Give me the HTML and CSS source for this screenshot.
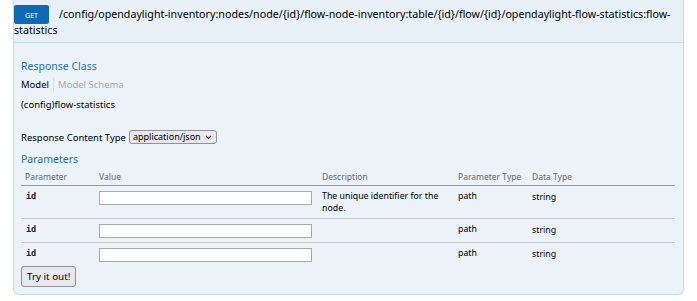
FILE: index.html
```html
<!DOCTYPE html>
<html lang="en">
<head>
    <meta charset="UTF-8">
    <title>flow-statistics</title>
    <link rel="stylesheet" href="styles.css">
</head>
<body>
    <div class="operation">
        <div class="heading">
            <span class="method">GET</span>
            <span class="path">/config/opendaylight-inventory:nodes/node/{id}/flow-node-inventory:table/{id}/flow/{id}/opendaylight-flow-statistics:flow-statistics</span>
        </div>

        <div class="content">
            <h4 class="section-title">Response Class</h4>
            <ul class="signature-nav">
                <li class="selected">Model</li>
                <li>Model Schema</li>
            </ul>
            <div class="model-name">(config)flow-statistics</div>

            <div class="content-type">
                <span>Response Content Type</span>
                <div class="select-box">
                    <select>
                        <option>application/json</option>
                        <option>application/xml</option>
                    </select>
                    <svg width="7" height="5" viewBox="0 0 7 5"><path d="M1 1 L3.5 3.5 L6 1" fill="none" stroke="#222" stroke-width="1.2"/></svg>
                </div>
            </div>

            <h4 class="section-title params-title">Parameters</h4>
            <table class="params">
                <colgroup>
                    <col style="width: 74px">
                    <col style="width: 223px">
                    <col style="width: 136px">
                    <col style="width: 74px">
                    <col>
                </colgroup>
                <thead>
                    <tr>
                        <th>Parameter</th>
                        <th>Value</th>
                        <th>Description</th>
                        <th>Parameter Type</th>
                        <th>Data Type</th>
                    </tr>
                </thead>
                <tbody>
                    <tr>
                        <td class="code">id</td>
                        <td><input type="text" class="param-input"></td>
                        <td>The unique identifier for the node.</td>
                        <td>path</td>
                        <td class="data-type">string</td>
                    </tr>
                    <tr>
                        <td class="code">id</td>
                        <td><input type="text" class="param-input"></td>
                        <td></td>
                        <td>path</td>
                        <td class="data-type">string</td>
                    </tr>
                    <tr>
                        <td class="code">id</td>
                        <td><input type="text" class="param-input"></td>
                        <td></td>
                        <td>path</td>
                        <td class="data-type">string</td>
                    </tr>
                </tbody>
            </table>

            <button class="try-btn">Try it out!</button>
        </div>
    </div>
</body>
</html>
```

FILE: styles.css
```css
* {
    margin: 0;
    padding: 0;
    box-sizing: border-box;
}

body {
    font-family: 'Noto Sans', 'Open Sans', sans-serif;
    background-color: #fff;
    color: #000;
}

.operation {
    width: 671px;
    margin-left: 13px;
}

/* 标题栏 */
.heading {
    background-color: #e7f0f7;
    border: 1px solid #c3d9ec;
    border-top: none;
    padding: 6px 0 4px 0;
    font-size: 10.7px;
    line-height: 16px;
}

.method {
    float: left;
    width: 35px;
    height: 19px;
    margin: -1px 10px -10px 0;
    background-color: #0f6ab4;
    color: #fff;
    font-size: 7px;
    line-height: 19px;
    padding-top: 1px;
    text-align: center;
    border-radius: 2px;
}

.path {
    color: #000;
}

/* 内容 */
.content {
    background-color: #ebf3f9;
    border: 1px solid #c3d9ec;
    border-top: none;
    border-radius: 0 0 6px 6px;
    padding: 17px 8px 7px 7px;
    font-size: 9.5px;
}

.section-title {
    font-size: 10.5px;
    line-height: 13px;
    font-weight: normal;
    color: #1f6fb8;
}

.signature-nav {
    list-style: none;
    display: flex;
    margin-top: 5px;
    line-height: 14px;
}

.signature-nav li {
    padding-left: 4px;
    color: #aaa;
}

.signature-nav li.selected {
    padding: 0 4px 0 0;
    color: #000;
    border-right: 1px solid #ddd;
}

.model-name {
    margin-top: 6px;
    line-height: 14px;
}

.content-type {
    display: flex;
    align-items: center;
    gap: 3px;
    height: 14px;
    margin-top: 18px;
}

.select-box {
    display: flex;
    align-items: center;
    width: 88px;
    height: 14px;
    padding: 0 4px 0 3px;
    background-color: #e9e9ed;
    border: 1px solid #8f8f9d;
    border-radius: 3px;
}

.select-box select {
    flex: 1;
    appearance: none;
    border: none;
    background: transparent;
    font-family: inherit;
    font-size: 9px;
    line-height: 12px;
    color: #000;
    outline: none;
}

.params-title {
    margin-top: 9px;
}

/* 参数表 */
.params {
    width: 100%;
    margin-top: 1px;
    border-collapse: collapse;
    table-layout: fixed;
}

.params th {
    text-align: left;
    font-weight: normal;
    font-size: 8.5px;
    line-height: 12px;
    white-space: nowrap;
    color: #666;
    padding: 4px 4px 2px;
    border-bottom: 1px solid #999;
}

.params td {
    font-size: 8.8px;
    line-height: 12px;
    padding: 4px;
    vertical-align: top;
    border-bottom: 1px solid #ccc;
}

.params tbody tr:last-child td {
    border-bottom: none;
}

.params td.code {
    font-family: 'DejaVu Sans Mono', monospace;
    font-weight: bold;
    font-size: 8.5px;
    padding-left: 5px;
    color: #222;
}

.params td.data-type {
    padding-top: 5px;
}

.param-input {
    display: block;
    width: 213px;
    height: 14px;
    margin-top: 1px;
    border: 1px solid #aaa;
    background-color: #fff;
}

.try-btn {
    height: 21px;
    padding: 0 5px;
    font-family: inherit;
    font-size: 9.8px;
    color: #000;
    background-color: #e9e9ed;
    border: 1px solid #8f8f9d;
    border-radius: 3px;
    cursor: pointer;
}
```
